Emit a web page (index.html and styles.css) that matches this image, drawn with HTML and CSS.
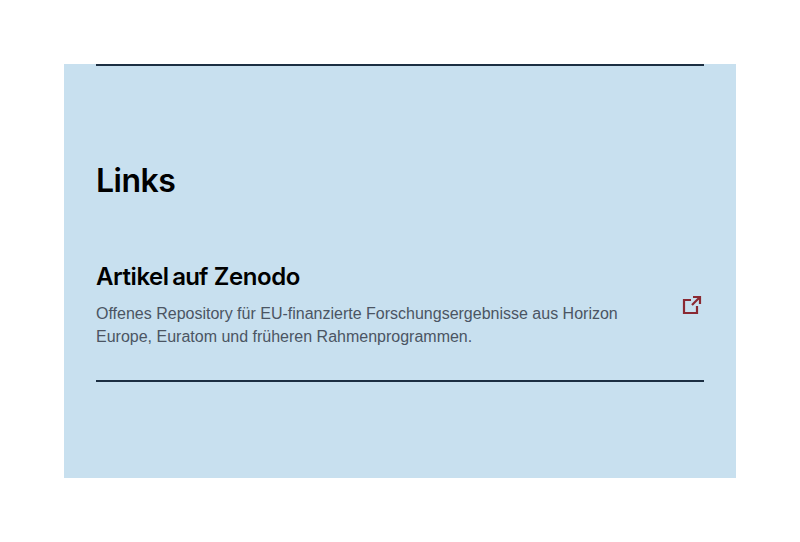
FILE: index.html
```html
<!DOCTYPE html>
<html lang="de">
<head>
<meta charset="utf-8">
<title>Links</title>
<link rel="stylesheet" href="styles.css">
</head>
<body>
<section class="panel">
  <div class="panel-inner">
    <h2 class="title">Links</h2>
    <a class="link" href="#">
      <span class="link-text">
        <span class="link-title">Artikel <span class="word">auf</span> <span class="word-last">Zenodo</span></span>
        <span class="link-desc">Offenes Repository für EU-finanzierte Forschungsergebnisse aus Horizon Europe, Euratom und früheren Rahmenprogrammen.</span>
      </span>
      <svg class="icon" viewBox="0 0 24 24" width="24" height="24" aria-hidden="true"><path d="M11 8H4v13h13v-7M13 5h7v7M20 5L12 13"/></svg>
    </a>
  </div>
</section>
</body>
</html>
```
FILE: styles.css
```css
* { box-sizing: border-box; }
body { margin: 0; padding: 64px; background: #fff; font-family: "Liberation Sans", Arial, sans-serif; }
.panel { height: 414px; padding: 0 32px; background: #c8e0ef; }
.panel-inner { border-top: 2px solid #1c2f42; }
.title { margin: 96px 0 0; font: 600 32px/38px Inter, sans-serif; letter-spacing: -.5px; color: #000; }
.link { display: flex; align-items: center; justify-content: space-between; height: 154px; margin-top: 28px; border-bottom: 2px solid #1c2f42; text-decoration: none; }
.link-text { display: block; width: 540px; }
.link-title { display: block; margin-bottom: 8px; font: 600 24px/34px Inter, sans-serif; letter-spacing: -.45px; color: #000; }
.word { margin-left: -2px; letter-spacing: -.8px; }
.word-last { margin-left: .5px; letter-spacing: -.4px; }
.link-desc { display: block; font-size: 16px; line-height: 23px; color: #4b5563; }
.icon { flex: none; fill: none; stroke: #8a2932; stroke-width: 2.200; }
```
